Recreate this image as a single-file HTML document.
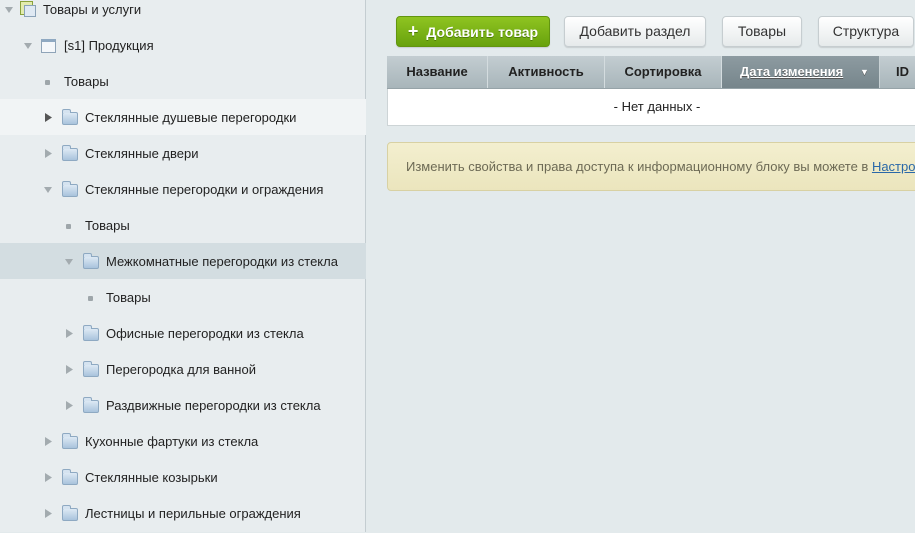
<!DOCTYPE html>
<html><head><meta charset="utf-8"><style>
*{margin:0;padding:0;box-sizing:border-box}
body{width:915px;height:532px;overflow:hidden;background:#e3eaec;font-family:"Liberation Sans",Arial,sans-serif;font-size:13px;color:#222;position:relative}
#left{position:absolute;left:0;top:0;width:366px;height:532px;background:#e8edef;border-right:1px solid #c4cdd1}
.row{position:absolute;left:0;width:366px;height:36px;line-height:38px;white-space:nowrap}
.row span.t{position:absolute;top:0}
.arr{position:absolute;top:14px}
.fold{position:absolute;top:13px;width:16px;height:13px;border:1px solid #8ea9c2;border-radius:2px;background:linear-gradient(#dde9f4,#a9c3dc)}
.fold:before{content:"";position:absolute;left:-1px;top:-4px;width:7px;height:3px;border:1px solid #8ea9c2;border-bottom:none;background:#d5e3f0;border-radius:2px 2px 0 0}
.dot{position:absolute;top:17px;width:5px;height:5px;background:#9ea6aa;border-radius:1px}
#right{position:absolute;left:367px;top:0;right:0;height:532px}
.btn{position:absolute;top:16px;height:31px;line-height:29px;border:1px solid #c6cdd0;border-radius:4px;background:linear-gradient(#fff,#e6eaeb);font-size:14px;color:#333;text-align:center;box-shadow:0 1px 1px rgba(0,0,0,.12)}
.green{background:linear-gradient(#8fc421,#68a20d);border-color:#62950f;color:#fff;font-weight:bold;text-shadow:0 1px 0 #4d7a08}
#hdr{position:absolute;left:20px;top:56px;width:540px;height:33px;background:linear-gradient(#c3cdd1,#a8b5ba);border-bottom:1px solid #96a3a8}
.th{position:absolute;top:0;height:32px;line-height:32px;text-align:center;font-weight:bold;font-size:13px;color:#222;border-right:1px solid #d4dcdf}
#data{position:absolute;left:20px;top:89px;width:540px;height:37px;background:#fff;border:1px solid #cdd4d6;border-top:none;text-align:center;line-height:36px;font-size:13px}
#note{position:absolute;left:20px;top:142px;width:540px;height:49px;background:linear-gradient(#f3efcf,#ebe5bd);border:1px solid #d8d1a3;border-radius:4px;line-height:47px;padding-left:18px;color:#6d6a55;font-size:13px;white-space:nowrap}
#note a{color:#2a68a8;text-decoration:underline}
</style></head><body>
<div id="left">
 <div class="row" style="top:-9px">
  <svg class="arr" style="left:5px;top:16px" width="8" height="6"><path d="M0 0h8L4 6z" fill="#a3abaf"/></svg>
  <div style="position:absolute;left:20px;top:10px;width:13px;height:14px;border:1px solid #8aa23c;background:#e3ecae"></div>
  <div style="position:absolute;left:24px;top:14px;width:12px;height:12px;border:1px solid #8aa2b8;background:#dfe9f3"></div>
  <span class="t" style="left:43px">Товары и услуги</span></div>
 <div class="row" style="top:27px">
  <svg class="arr" style="left:24px;top:16px" width="8" height="6"><path d="M0 0h8L4 6z" fill="#a3abaf"/></svg>
  <div style="position:absolute;left:41px;top:12px;width:15px;height:14px;border:1px solid #8fa4b8;background:#f4f7fa;border-top:3px solid #8fa9c2"></div>
  <span class="t" style="left:64px">[s1] Продукция</span></div>
 <div class="row" style="top:63px"><div class="dot" style="left:45px"></div><span class="t" style="left:64px">Товары</span></div>
 <div class="row" style="top:99px;background:#f1f4f5"><svg class="arr" style="left:45px" width="7" height="9"><path d="M0 0L7 4.5L0 9z" fill="#555"/></svg><div class="fold" style="left:62px"></div><span class="t" style="left:85px">Стеклянные душевые перегородки</span></div>
 <div class="row" style="top:135px"><svg class="arr" style="left:45px" width="7" height="9"><path d="M0 0L7 4.5L0 9z" fill="#a3abaf"/></svg><div class="fold" style="left:62px"></div><span class="t" style="left:85px">Стеклянные двери</span></div>
 <div class="row" style="top:171px"><svg class="arr" style="left:44px;top:16px" width="8" height="6"><path d="M0 0h8L4 6z" fill="#a3abaf"/></svg><div class="fold" style="left:62px"></div><span class="t" style="left:85px">Стеклянные перегородки и ограждения</span></div>
 <div class="row" style="top:207px"><div class="dot" style="left:66px"></div><span class="t" style="left:85px">Товары</span></div>
 <div class="row" style="top:243px;background:#d3dde1"><svg class="arr" style="left:65px;top:16px" width="8" height="6"><path d="M0 0h8L4 6z" fill="#a3abaf"/></svg><div class="fold" style="left:83px"></div><span class="t" style="left:106px">Межкомнатные перегородки из стекла</span></div>
 <div class="row" style="top:279px"><div class="dot" style="left:88px"></div><span class="t" style="left:106px">Товары</span></div>
 <div class="row" style="top:315px"><svg class="arr" style="left:66px" width="7" height="9"><path d="M0 0L7 4.5L0 9z" fill="#a3abaf"/></svg><div class="fold" style="left:83px"></div><span class="t" style="left:106px">Офисные перегородки из стекла</span></div>
 <div class="row" style="top:351px"><svg class="arr" style="left:66px" width="7" height="9"><path d="M0 0L7 4.5L0 9z" fill="#a3abaf"/></svg><div class="fold" style="left:83px"></div><span class="t" style="left:106px">Перегородка для ванной</span></div>
 <div class="row" style="top:387px"><svg class="arr" style="left:66px" width="7" height="9"><path d="M0 0L7 4.5L0 9z" fill="#a3abaf"/></svg><div class="fold" style="left:83px"></div><span class="t" style="left:106px">Раздвижные перегородки из стекла</span></div>
 <div class="row" style="top:423px"><svg class="arr" style="left:45px" width="7" height="9"><path d="M0 0L7 4.5L0 9z" fill="#a3abaf"/></svg><div class="fold" style="left:62px"></div><span class="t" style="left:85px">Кухонные фартуки из стекла</span></div>
 <div class="row" style="top:459px"><svg class="arr" style="left:45px" width="7" height="9"><path d="M0 0L7 4.5L0 9z" fill="#a3abaf"/></svg><div class="fold" style="left:62px"></div><span class="t" style="left:85px">Стеклянные козырьки</span></div>
 <div class="row" style="top:495px"><svg class="arr" style="left:45px" width="7" height="9"><path d="M0 0L7 4.5L0 9z" fill="#a3abaf"/></svg><div class="fold" style="left:62px"></div><span class="t" style="left:85px">Лестницы и перильные ограждения</span></div>
</div>
<div id="right">
 <div class="btn green" style="left:29px;width:154px"><span style="font-size:18px;margin-right:8px">+</span>Добавить товар</div>
 <div class="btn" style="left:197px;width:142px">Добавить раздел</div>
 <div class="btn" style="left:355px;width:80px">Товары</div>
 <div class="btn" style="left:451px;width:96px">Структура</div>
 <div id="hdr">
  <div class="th" style="left:0;width:101px">Название</div>
  <div class="th" style="left:101px;width:117px">Активность</div>
  <div class="th" style="left:218px;width:117px">Сортировка</div>
  <div class="th" style="left:335px;width:158px;background:linear-gradient(#8d9ba1,#76858b);color:#fff;text-decoration:underline;text-shadow:0 1px 0 #555;text-align:left;padding-left:18px;border-right:1px solid #c8d1d4">Дата изменения<span style="position:absolute;left:138px;font-size:9px;text-decoration:none">▼</span></div>
  <div class="th" style="left:493px;width:60px;text-align:left;padding-left:16px;border:none">ID</div>
 </div>
 <div id="data">- Нет данных -</div>
 <div id="note">Изменить свойства и права доступа к информационному блоку вы можете в <a>Настройках</a></div>
</div>
</body></html>
